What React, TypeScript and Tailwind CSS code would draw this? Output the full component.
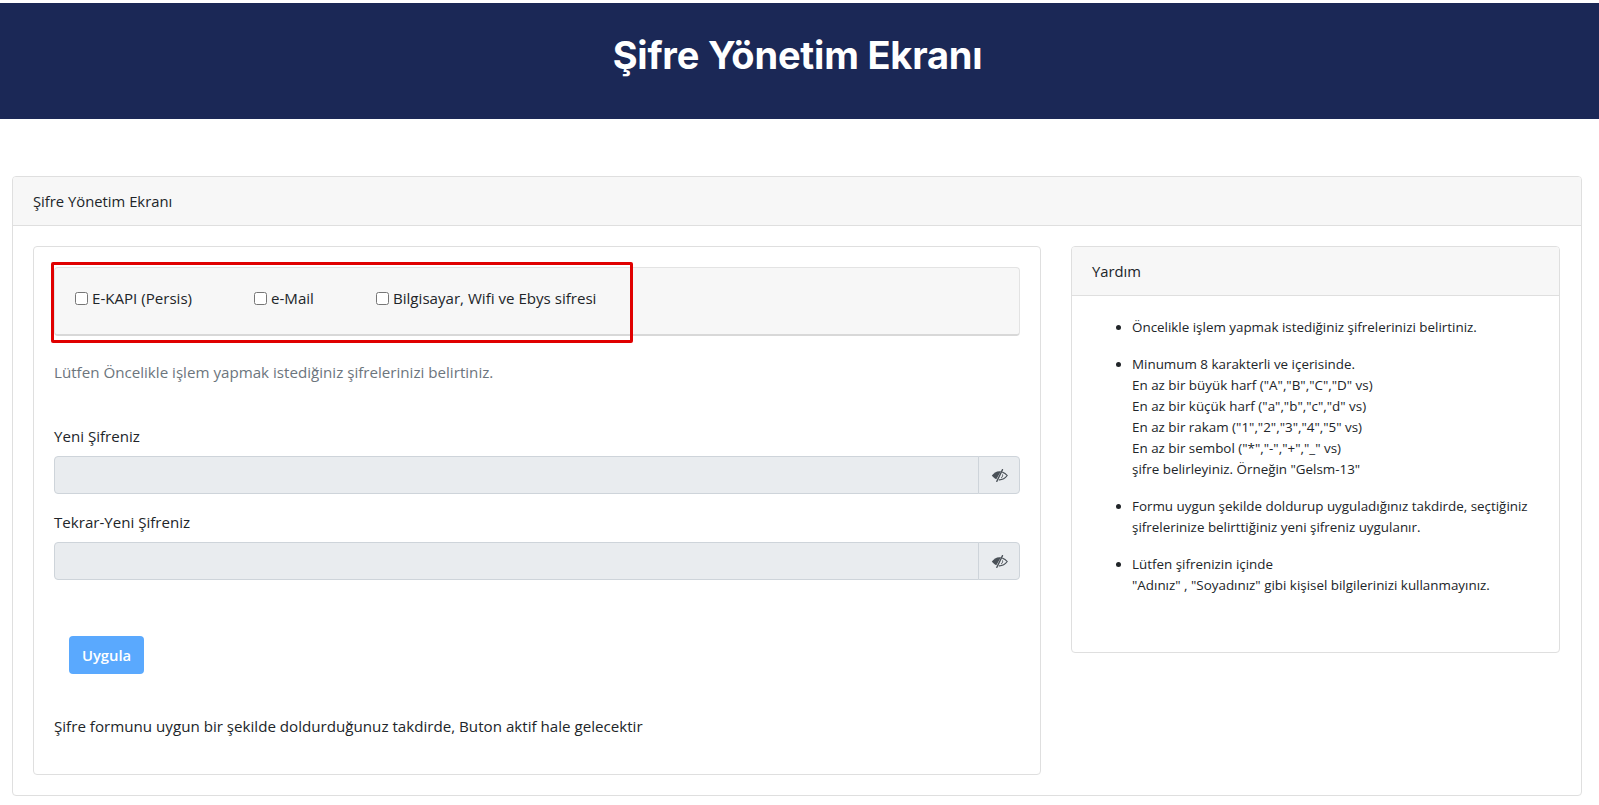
const font = "[font-family:'Open_Sans','Noto_Sans',sans-serif]";

function EyeSlash() {
  return (
    <svg viewBox="0 0 17 13" className="w-[17px] h-[13px]" fill="none">
      <path d="M10 2.300C6 1.500 3 3.800 0.800 6.500 1.800 8 3.300 9.400 5.300 10.200Z" fill="#495057" />
      <path d="M11.300 3.100C13.300 3.800 15 5 16.200 6.500 14 9.500 10.800 11 7.800 10.800" stroke="#495057" strokeWidth="1.200" />
      <path d="M11.500 0.600L5.800 12.400" stroke="#495057" strokeWidth="1.300" strokeLinecap="round" />
      <path d="M11.500 5.500C12 7 11 8.500 10 9.200" stroke="#495057" strokeWidth="1" />
    </svg>
  );
}

function PasswordField({ label }: { label: string }) {
  return (
    <div>
      <label className="block text-[15.1px] leading-[22px] text-[#212529] mb-[9px]">{label}</label>
      <div className="flex h-[38px]">
        <input disabled className="flex-1 min-w-0 bg-[#e9ecef] border border-[#ced4da] rounded-l-[4px]" />
        <span className="w-[42px] -ml-px flex items-center justify-center bg-[#e9ecef] border border-[#ced4da] rounded-r-[4px]">
          <EyeSlash />
        </span>
      </div>
    </div>
  );
}

function Check({ label, width }: { label: string; width: string }) {
  return (
    <label className={`flex items-center gap-[4px] text-[15.100px] leading-[22px] text-[#212529] ${width}`}>
      <input type="checkbox" className="w-[13px] h-[13px] m-0 appearance-auto" />
      <span>{label}</span>
    </label>
  );
}

const helpClass = "text-[13.400px] leading-[21px] text-[#212529]";

export default function App() {
  return (
    <div className={`${font} bg-white min-h-[805px] pt-[3px]`}>
      <header className="h-[116px] bg-[#1b2856] flex items-center justify-center pb-[12px] pr-[4px]">
        <h1 className="text-[38px] leading-[44px] font-bold tracking-[-0.2px] text-white [font-family:'Inter',sans-serif]">
          Şifre Yönetim Ekranı
        </h1>
      </header>

      <div className="ml-[12px] mt-[57px] mr-[17px] border border-[#dfdfdf] rounded-[4px] overflow-hidden">
        <div className="h-[49px] bg-[#f7f7f7] border-b border-[#dfdfdf] flex items-center px-[20px] pt-[1px] text-[14.800px] text-[#212529]">
          Şifre Yönetim Ekranı
        </div>
        <div className="flex items-start gap-[30px] pl-[20px] pr-[21px] py-[20px]">
          <div className="w-[1008px] shrink-0 h-[529px] border border-[#dfdfdf] rounded-[4px] pl-[20px] pr-[20px] pt-[20px]">
            <div className="relative">
              <div className="h-[69px] bg-[#f7f7f7] border border-[#e3e3e3] border-b-2 border-b-[#d8d8d8] rounded-[4px] flex items-center pl-[20px] pb-[6px]">
                <Check label="E-KAPI (Persis)" width="w-[179px]" />
                <Check label="e-Mail" width="w-[122px]" />
                <Check label="Bilgisayar, Wifi ve Ebys sifresi" width="" />
              </div>
              <div className="absolute left-[-3px] top-[-5px] w-[582px] h-[81px] border-[3px] border-[#e00000] rounded-[2px] pointer-events-none" />
            </div>

            <p className="mt-[25px] text-[15.150px] leading-[22px] text-[#6c757d]">
              Lütfen Öncelikle işlem yapmak istediğiniz şifrelerinizi belirtiniz.
            </p>

            <div className="mt-[42px] flex flex-col gap-[17px]">
              <PasswordField label="Yeni Şifreniz" />
              <PasswordField label="Tekrar-Yeni Şifreniz" />
            </div>

            <button className="block mt-[56px] ml-[15px] w-[75px] h-[38px] rounded-[4px] bg-[#5aa9fe] text-white text-[14.800px] font-semibold">
              Uygula
            </button>

            <p className="mt-[41px] text-[15.150px] leading-[22px] text-[#212529]">
              Şifre formunu uygun bir şekilde doldurduğunuz takdirde, Buton aktif hale gelecektir
            </p>
          </div>

          <div className="flex-1 h-[407px] border border-[#dfdfdf] rounded-[4px] overflow-hidden">
            <div className="h-[49px] bg-[#f7f7f7] border-b border-[#dfdfdf] flex items-center px-[20px] pt-[1px] text-[14.800px] text-[#212529]">
              Yardım
            </div>
            <ul className={`list-disc pl-[60px] pr-[20px] pt-[21px] flex flex-col gap-[16px] ${helpClass}`}>
              <li>Öncelikle işlem yapmak istediğiniz şifrelerinizi belirtiniz.</li>
              <li>
                Minumum 8 karakterli ve içerisinde.
                <br />En az bir büyük harf ("A","B","C","D" vs)
                <br />En az bir küçük harf ("a","b","c","d" vs)
                <br />En az bir rakam ("1","2","3","4","5" vs)
                <br />En az bir sembol ("*","-","+","_" vs)
                <br />şifre belirleyiniz. Örneğin "Gelsm-13"
              </li>
              <li>
                Formu uygun şekilde doldurup uyguladığınız takdirde, seçtiğiniz
                <br />şifrelerinize belirttiğiniz yeni şifreniz uygulanır.
              </li>
              <li>
                Lütfen şifrenizin içinde
                <br />"Adınız" , "Soyadınız" gibi kişisel bilgilerinizi kullanmayınız.
              </li>
            </ul>
          </div>
        </div>
      </div>
    </div>
  );
}
